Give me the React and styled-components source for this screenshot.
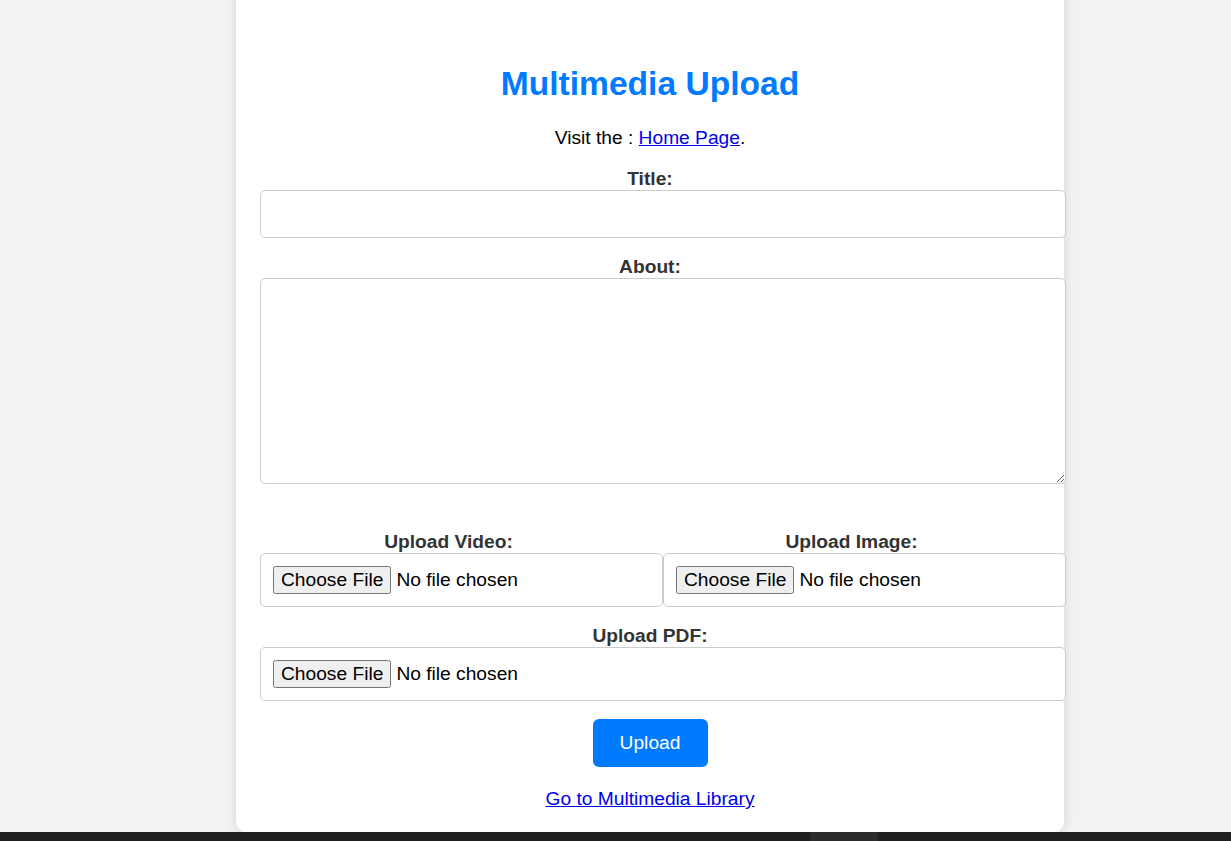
import React from 'react';
import styled, { createGlobalStyle } from 'styled-components';

const GlobalStyle = createGlobalStyle`
    html, body {
        margin: 0;
        padding: 0;
        background: #f2f2f2;
        font-family: "Liberation Sans", Arial, sans-serif;
    }
`

const Screen = styled.div`
    height: 100vh;
    display: grid;
    grid-template-rows: 1fr 9px;
    overflow: hidden;
`

const Main = styled.main`
    overflow: hidden;
`

const Card = styled.div`
    width: 780px;
    margin: -24px 0 0 236px;
    padding: 24px 24px 23px;
    background: #fff;
    border-radius: 12px;
    box-shadow: 0 0 12px rgba(0, 0, 0, 0.12);
`

const Title = styled.h2`
    margin: 65px 0 24px;
    text-align: center;
    color: #007bff;
    font-size: 33.6px;
    font-weight: bold;
`

const Intro = styled.p`
    margin: 0 0 19px;
    text-align: center;
    font-size: 19.2px;
    color: #000;
`

const TextLink = styled.a`
    color: #0000ee;
    text-decoration: underline;
`

const Group = styled.div`
    margin-bottom: ${p => p.$space || 18}px;
    min-width: 0;
`

const Label = styled.label`
    display: block;
    text-align: center;
    font-size: 19.2px;
    font-weight: bold;
    color: #333;
`

const field = `
    display: block;
    box-sizing: content-box;
    width: 100%;
    padding: 12px;
    border: 1px solid #ccc;
    border-radius: 5px;
    background: #fff;
    font-family: "Liberation Sans", Arial, sans-serif;
    font-size: 19.2px;
    margin: 0;
`

const TextInput = styled.input`
    ${field}
    height: 22px;
`

const TextArea = styled.textarea`
    ${field}
    height: 180px;
    resize: vertical;
`

const FileInput = styled.input`
    ${field}
    height: 28px;
    color: #000;
    &::file-selector-button {
        font-family: "Liberation Sans", Arial, sans-serif;
        font-size: 19.2px;
        margin-right: 5px;
    }
`

const FileRow = styled.div`
    display: flex;
    gap: 26px;
    & > div {
        flex: 1;
    }
`

const Actions = styled.div`
    display: flex;
    justify-content: center;
`

const UploadButton = styled.button`
    width: 115px;
    height: 48px;
    border: none;
    border-radius: 6px;
    background: #007bff;
    color: #fff;
    font-family: "Liberation Sans", Arial, sans-serif;
    font-size: 19.2px;
    cursor: pointer;
`

const LibraryLink = styled(TextLink)`
    display: block;
    width: fit-content;
    margin: 21px auto 0;
    font-size: 19.2px;
`

const Taskbar = styled.div`
    background: #202020;
    display: flex;
`

const TaskItem = styled.div`
    width: 68px;
    margin-left: 810px;
    background: #2c2c2c;
    border-radius: 3px 3px 0 0;
`

const App = () => {
    return (
        <>
            <GlobalStyle />
            <Screen>
                <Main>
                    <Card>
                        <Title>Multimedia Upload</Title>
                        <Intro>
                            Visit the : <TextLink href="#">Home Page</TextLink>.
                        </Intro>
                        <form onSubmit={e => e.preventDefault()}>
                            <Group>
                                <Label htmlFor="title">Title:</Label>
                                <TextInput id="title" type="text" />
                            </Group>
                            <Group $space={47}>
                                <Label htmlFor="about">About:</Label>
                                <TextArea id="about" />
                            </Group>
                            <FileRow>
                                <Group>
                                    <Label htmlFor="video">Upload Video:</Label>
                                    <FileInput id="video" type="file" accept="video/*" />
                                </Group>
                                <Group>
                                    <Label htmlFor="image">Upload Image:</Label>
                                    <FileInput id="image" type="file" accept="image/*" />
                                </Group>
                            </FileRow>
                            <Group>
                                <Label htmlFor="pdf">Upload PDF:</Label>
                                <FileInput id="pdf" type="file" accept="application/pdf" />
                            </Group>
                            <Actions>
                                <UploadButton type="submit">Upload</UploadButton>
                            </Actions>
                        </form>
                        <LibraryLink href="#">Go to Multimedia Library</LibraryLink>
                    </Card>
                </Main>
                <Taskbar>
                    <TaskItem />
                </Taskbar>
            </Screen>
        </>
    )
}

export default App;
